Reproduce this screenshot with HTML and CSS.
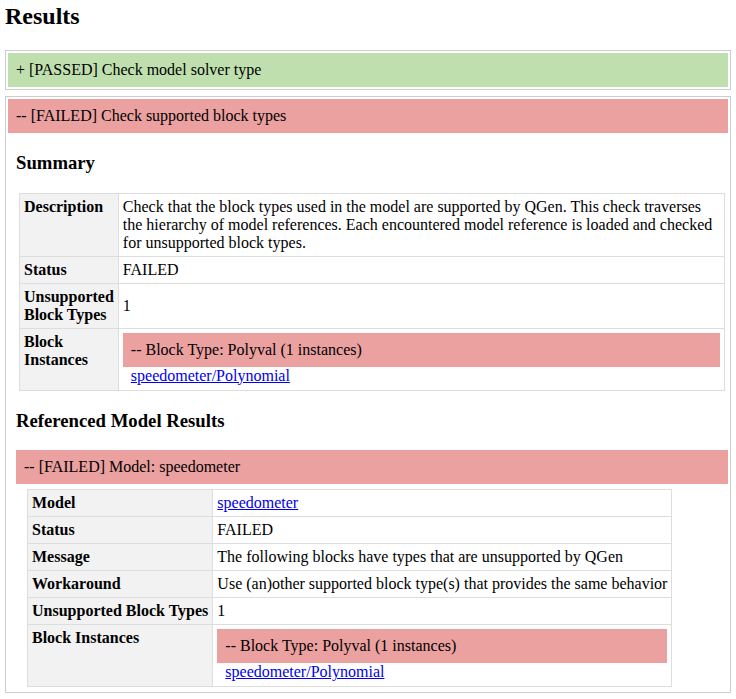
FILE: index.html
```html
<!DOCTYPE html>
<html lang="en">
<head>
    <meta charset="UTF-8">
    <title>Results</title>
    <link rel="stylesheet" href="styles.css">
</head>
<body>

<h1>Results</h1>

<div class="check">
    <div class="bar passed">+ [PASSED] Check model solver type</div>
</div>

<div class="check">
    <div class="bar failed">-- [FAILED] Check supported block types</div>
    <div class="content">
        <h3>Summary</h3>
        <table class="info summary">
            <tr>
                <th>Description</th>
                <td>Check that the block types used in the model are supported by QGen. This check traverses the hierarchy of model references. Each encountered model reference is loaded and checked for unsupported block types.</td>
            </tr>
            <tr>
                <th>Status</th>
                <td>FAILED</td>
            </tr>
            <tr>
                <th>Unsupported Block Types</th>
                <td class="middle">1</td>
            </tr>
            <tr>
                <th>Block Instances</th>
                <td>
                    <div class="bar failed">-- Block Type: Polyval (1 instances)</div>
                    <div class="content instances"><a href="#">speedometer/Polynomial</a></div>
                </td>
            </tr>
        </table>

        <h3>Referenced Model Results</h3>
        <div class="bar failed">-- [FAILED] Model: speedometer</div>
        <div class="content">
            <table class="info nowrap">
                <tr>
                    <th>Model</th>
                    <td><a href="#">speedometer</a></td>
                </tr>
                <tr>
                    <th>Status</th>
                    <td>FAILED</td>
                </tr>
                <tr>
                    <th>Message</th>
                    <td>The following blocks have types that are unsupported by QGen</td>
                </tr>
                <tr>
                    <th>Workaround</th>
                    <td>Use (an)other supported block type(s) that provides the same behavior</td>
                </tr>
                <tr>
                    <th>Unsupported Block Types</th>
                    <td>1</td>
                </tr>
                <tr>
                    <th>Block Instances</th>
                    <td>
                        <div class="bar failed">-- Block Type: Polyval (1 instances)</div>
                        <div class="content instances"><a href="#">speedometer/Polynomial</a></div>
                    </td>
                </tr>
            </table>
        </div>
    </div>
</div>

</body>
</html>
```

FILE: styles.css
```css
/* Report page */
body {
    font-family: "Liberation Serif", "Times New Roman", serif;
    font-size: 16px;
    line-height: 18px;
    margin: 0 5px 5px;
    color: #000;
    background-color: #fff;
}
h1 {
    font-size: 24px;
    line-height: 28px;
    margin: 2px 0 20px;
}
h3 {
    font-size: 18.72px;
    line-height: 21.5px;
    margin: 19px 0;
}
a {
    color: #0000ee;
}

/* Collapsible check blocks */
.check {
    border: 1px solid #ccc;
    padding: 2px;
    margin-bottom: 6px;
}
.bar {
    padding: 8px;
}
.passed {
    background-color: #bfe0ae;
}
.failed {
    background-color: #eba1a0;
}
.content {
    padding-left: 8px;
}
.instances {
    padding-bottom: 1px;
}

/* Detail tables */
.info {
    border-collapse: collapse;
    margin: 5px 3px 3px;
}
.info th, .info td {
    border: 1px solid #ddd;
    padding: 4px;
    text-align: left;
    vertical-align: top;
}
.info th {
    background-color: #f2f2f2;
}
.summary th {
    width: 1%;
}
.info td.middle {
    vertical-align: middle;
}
.nowrap th {
    white-space: nowrap;
}
```
